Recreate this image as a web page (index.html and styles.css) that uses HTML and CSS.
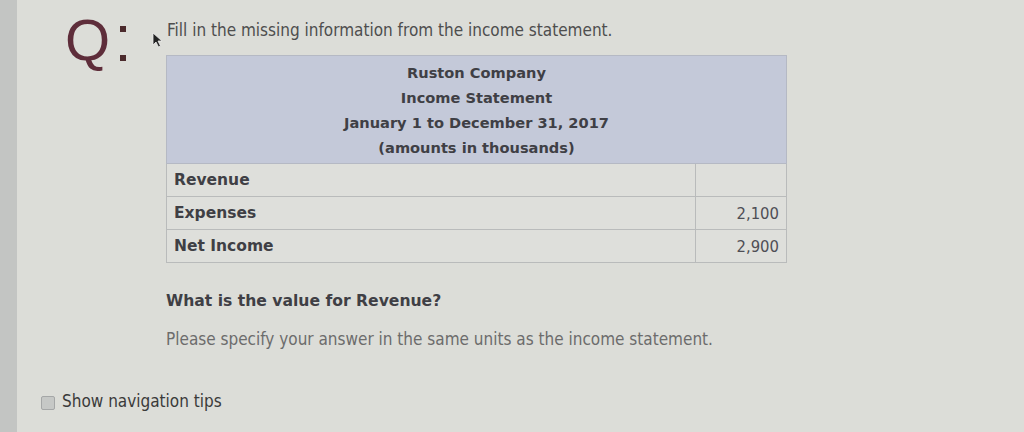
FILE: index.html
```html
<!DOCTYPE html>
<html>
<head>
<meta charset="utf-8">
<link rel="stylesheet" href="styles.css">
</head>
<body>
<div class="page">
  <div class="strip"></div>
  <div class="content">
    <div class="question">
      <div class="qmark">Q<span class="colon"><i></i><i></i></span></div>
      <div class="body">
        <p class="prompt">Fill in the missing information from the income statement.</p>
        <table class="stmt">
          <tr class="head"><th colspan="2">Ruston Company<br>Income Statement<br>January 1 to December 31, 2017<br>(amounts in thousands)</th></tr>
          <tr><td class="label">Revenue</td><td class="val"></td></tr>
          <tr><td class="label">Expenses</td><td class="val">2,100</td></tr>
          <tr><td class="label">Net Income</td><td class="val">2,900</td></tr>
        </table>
        <p class="ask">What is the value for Revenue?</p>
        <p class="hint">Please specify your answer in the same units as the income statement.</p>
      </div>
    </div>
    <label class="tips"><span class="box"></span>Show navigation tips</label>
  </div>
  <svg class="cursor" width="12" height="16" viewBox="0 0 12 16"><path d="M1 1 L1 13 L4 10 L6.5 15 L8.5 14 L6 9 L10 9 Z" fill="#222" stroke="#eee" stroke-width="0.8"/></svg>
</div>
</body>
</html>
```
FILE: styles.css
```css
html, body { margin: 0; padding: 0; }
body {
  width: 1024px; height: 432px; overflow: hidden;
  background: #dcddd8;
  font-family: "DejaVu Sans", Verdana, sans-serif;
}
.page { position: relative; display: flex; height: 432px; }
.strip { width: 17px; background: #c3c5c3; flex: none; }
.content { flex: 1; display: flex; flex-direction: column; }
.question { display: flex; padding-top: 10px; }
.qmark {
  width: 149px; flex: none; box-sizing: border-box; padding-left: 48px;
  font-family: "Liberation Sans", Arial, sans-serif; font-size: 58px; line-height: 60px;
  color: #5e2d3a; display: flex; align-items: flex-start;
}
.colon { display: flex; flex-direction: column; justify-content: space-between; height: 35px; margin: 16px 0 0 10px; }
.colon i { display: block; width: 6px; height: 6px; background: #4b2a2c; }
.body { flex: none; width: 620px; }
.prompt {
  margin: 10px 0 0 1px; font-family: "DejaVu Sans Condensed", "DejaVu Sans", sans-serif;
  font-size: 17px; color: #4e4e4e; line-height: 20px; white-space: nowrap;
}
.stmt {
  margin-top: 15px; width: 621px; border-collapse: collapse;
  font-size: 14.6px; font-weight: bold; color: #3f3f45;
}
.stmt th {
  background: #c4c9d9; border: 1px solid #b5b9c4; height: 106px;
  line-height: 25px; font-weight: bold; padding: 1px 0 0; vertical-align: middle;
}
.stmt td { border: 1px solid #b9bbbb; height: 32px; background: #dedfdb; padding: 0 7px; font-size: 15.5px; }
.stmt td.val { width: 76px; text-align: right; font-weight: normal; color: #4e4e55; font-size: 16.5px; font-family: "DejaVu Sans Condensed", "DejaVu Sans", sans-serif; }
.ask { margin: 28px 0 0 0; font-size: 15.6px; font-weight: bold; color: #3f3f45; line-height: 20px; }
.hint {
  margin: 18px 0 0 0; font-family: "DejaVu Sans Condensed", "DejaVu Sans", sans-serif;
  font-size: 17px; color: #6c6c6c; line-height: 20px; white-space: nowrap;
}
.tips {
  margin: 42px 0 0 24px; display: flex; align-items: center; gap: 7px;
  font-family: "DejaVu Sans Condensed", "DejaVu Sans", sans-serif; font-size: 17px; color: #3a3a3a;
}
.box { width: 12px; height: 12px; border: 1px solid #a5a7a7; background: #c6c8c6; border-radius: 2px; margin-top: 4px; }
.cursor { position: absolute; left: 152px; top: 32px; }
```
